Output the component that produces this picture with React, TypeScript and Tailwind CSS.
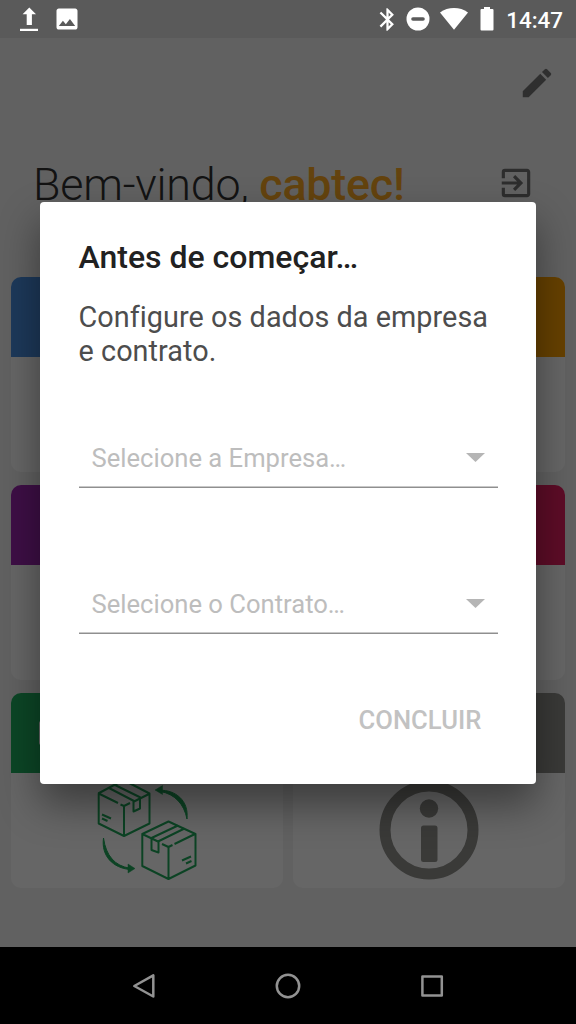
import { MdBluetooth, MdEdit, MdExitToApp, MdImage } from "react-icons/md";

const cards = [
  { id: "blue", header: "bg-[#4a90e2]" },
  { id: "orange", header: "bg-[#ffa200]" },
  { id: "purple", header: "bg-[#9c27b0]" },
  { id: "pink", header: "bg-[#e91e63]" },
  { id: "transfer", header: "bg-[#20b060]" },
  { id: "info", header: "bg-[#91918d]" },
];

function StatusBar() {
  return (
    <div className="flex h-[38px] shrink-0 items-center bg-[#5a5a5a] text-white">
      <svg className="ml-5 h-6 w-[18px]" viewBox="0 0 18 24" fill="currentColor">
        <path d="M9.300 0.500 16 7.200H11.900V18H6.700V7.200H2.600Z" />
        <path d="M0 21.800h18V24.200H0z" />
      </svg>
      <MdImage className="ml-[15px] size-7" />
      <div className="ml-auto flex items-center">
        <MdBluetooth className="size-[27px]" />
        <svg className="ml-[5px] size-6" viewBox="0 0 24 24">
          <circle cx="12" cy="12" r="11.5" fill="currentColor" />
          <path d="M7 12h10" stroke="#5a5a5a" strokeWidth="3.6" strokeLinecap="round" />
        </svg>
        <svg className="ml-2.5 h-6 w-7" viewBox="0 0 28 24" fill="currentColor">
          <path d="M0 5.5C4 2.3 9 1 14 1s10 1.3 14 4.500L14 22.800Z" />
        </svg>
        <svg className="ml-3 h-6 w-3.5" viewBox="0 0 14 24" fill="currentColor">
          <path d="M4 0h6v2h2.500q1 0 1 1V22.500q0 1-1 1h-11q-1 0-1-1V3q0-1 1-1H4z" />
        </svg>
      </div>
      <span className="ml-3 mr-[13px] pt-0.5 text-[22.4px] font-medium leading-none">14:47</span>
    </div>
  );
}

function BoxesIcon() {
  return (
    <svg
      className="-mt-1 h-[104px] w-[104px]"
      viewBox="0 0 104 104"
      fill="none"
      stroke="#20a85a"
      strokeWidth="2"
      strokeLinejoin="round"
    >
      <path d="M3.200 17.500 28.500 4 54.500 17.500V47.500L29 60 3.700 47.500V17.500L23 27M25.500 28.500 29 30 35 27M38 26 54 18M29 30V59.500M14 12 39 25M20 9 45.500 21.500M38.500 25v10.500l6.500-3V22" />
      <path d="M7 38.500 16 42.500M7 42.500 12.500 45" />
      <path d="M47.300 58 73.500 45.500 100.500 58V89.500L73.500 103 47.300 90ZM47.300 58 63 65.500M67 68 73.500 71 77.500 69M79.500 68 100 58M73.500 71V102.500M56.500 62 83 49.500M63 65.500 89.500 52.500M56.500 62V74L63.500 76.500V66" />
      <path d="M87 84.500 96 80.500M91 87.500 96.500 85" />
      <path d="M65 14.200C80 14 94 24 92 43C89 28 80 18 65 15.400ZM8.500 62C6 80 18 92 35 93.500V92.200C20 90 11 80 8.500 62Z" strokeWidth="1" fill="#20a85a" />
      <path d="M60 14 67.500 9.500V18.500ZM40 92.500 33 88V97Z" strokeWidth="0.500" fill="#20a85a" />
    </svg>
  );
}

function InfoIcon() {
  return (
    <svg className="h-[100px] w-[100px]" viewBox="0 0 100 100" fill="#91918d">
      <circle cx="50" cy="50" r="44" fill="none" stroke="#91918d" strokeWidth="11" />
      <circle cx="50" cy="28.500" r="9.200" />
      <rect x="42" y="45.500" width="16.500" height="36.500" rx="2.500" />
    </svg>
  );
}

function Home() {
  return (
    <div className="flex h-[909px] flex-col bg-[#f3f3f3]">
      <div className="flex justify-end pr-5 pt-[26px]">
        <MdEdit className="size-[38px] text-[#777]" />
      </div>
      <div className="mt-[50px] flex h-[60px] items-center justify-between pl-[33px] pr-[41px]">
        <h1 className="mt-[7px] whitespace-nowrap text-[44.8px] font-light leading-none tracking-[-0.24px] text-[#303030]">
          Bem-vindo, <span className="font-medium text-[#f9a825]">cabtec!</span>
        </h1>
        <MdExitToApp className="mt-px size-[38px] text-[#707070]" />
      </div>
      <div className="mt-[65px] grid grid-cols-2 gap-x-2.5 gap-y-[13px] px-[11px]">
        {cards.map((card) => (
          <div key={card.id} className="h-[195px] overflow-hidden rounded-[10px] bg-white">
            <div className={`flex h-20 items-center pl-7 ${card.header}`}>
              {card.id === "transfer" && <span className="h-6 w-1 rounded-xs bg-white" />}
            </div>
            <div className="flex justify-center pt-[7px]">
              {card.id === "transfer" && <BoxesIcon />}
              {card.id === "info" && <InfoIcon />}
            </div>
          </div>
        ))}
      </div>
    </div>
  );
}

function SelectField({ label }: { label: string }) {
  return (
    <button
      type="button"
      className="flex h-[60px] w-full items-center justify-between border-b border-[#8f8f8f] px-[13px] text-[25.6px] text-[#bdbdbd] shadow-[inset_0_-1px_0_#c8c8c8]"
    >
      <span className="pt-0.5">{label}</span>
      <svg className="-mt-px h-[9px] w-[19px]" viewBox="0 0 19 9" fill="#b5b5b5">
        <path d="M0 0h19L9.500 9z" />
      </svg>
    </button>
  );
}

function SetupDialog() {
  return (
    <div className="flex h-[582px] w-[496px] flex-col rounded-[4px] bg-white px-[38.500px] pt-[38px] shadow-[0_20px_40px_rgba(0,0,0,0.42)]">
      <h2 className="text-[32px] font-medium leading-[34px] text-[#212121]">Antes de começar…</h2>
      <p className="mt-[26px] whitespace-nowrap text-[28.8px] leading-[34px] tracking-[0.05px] text-[#4d4d4d]">
        Configure os dados da empresa
        <br />e contrato.
      </p>
      <div className="mt-[60px] flex flex-col gap-[86px]">
        <SelectField label="Selecione a Empresa…" />
        <SelectField label="Selecione o Contrato…" />
      </div>
      <button type="button" className="mr-4 mt-[70px] self-end text-[25.6px] font-medium leading-8 tracking-[0.06px] text-[#c2c2c2]">
        CONCLUIR
      </button>
    </div>
  );
}

function NavigationBar() {
  return (
    <div className="flex h-[77px] items-center justify-center gap-[116px] bg-black">
      {["M24.300 4.300V25.500L5.300 15Z", "M15 3.800a11.200 11.200 0 1 1 0 22.400a11.200 11.200 0 1 1 0-22.400Z", "M5.400 5.400h19.400v19.200H5.400Z"].map((d) => (
        <svg key={d} className="h-7 w-7" viewBox="1 1 28 28" fill="none" stroke="#929292" strokeWidth="2.500" strokeLinejoin="round">
          <path d={d} />
        </svg>
      ))}
    </div>
  );
}

export default function App() {
  return (
    <div className="h-[1024px] w-[576px] overflow-hidden bg-black font-['Roboto',sans-serif]">
      <StatusBar />
      <div className="relative">
        <Home />
        <div className="absolute inset-0 flex justify-center bg-black/60 pt-[164px]">
          <SetupDialog />
        </div>
      </div>
      <NavigationBar />
    </div>
  );
}
